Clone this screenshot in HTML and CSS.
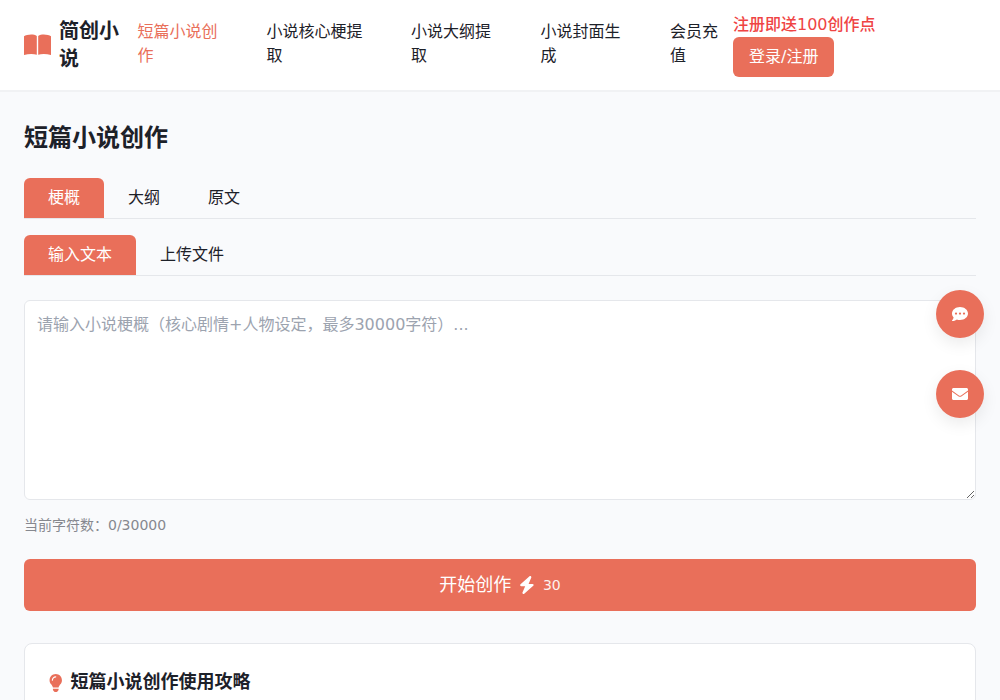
FILE: index.html
```html
<!DOCTYPE html>
<html lang="zh-CN">
<head>
    <meta charset="UTF-8">
    <meta name="viewport" content="width=device-width, initial-scale=1.0">
    <title>简创小说</title>
    <link rel="stylesheet" href="styles.css">
</head>
<body>

    <header class="header">
        <div class="logo">
            <svg class="logo-icon" viewBox="0 0 27 24" fill="currentColor"><path d="M0 3.200C2.500 1.600 9.500.4 12.800 3.100V21.800C9.600 20.500 4.500 20.600 0 22zM14.200 3.100C17.500.4 24.500 1.600 27 3.200V22C22.500 20.600 17.400 20.500 14.200 21.800z"/></svg>
            <span>简创小说</span>
        </div>
        <nav class="nav">
            <a class="nav-link active">短篇小说创作</a>
            <a class="nav-link">小说核心梗提取</a>
            <a class="nav-link">小说大纲提取</a>
            <a class="nav-link">小说封面生成</a>
            <a class="nav-link">会员充值</a>
        </nav>
        <div class="auth">
            <div class="auth-tip">注册即送100创作点</div>
            <button class="login-btn">登录/注册</button>
        </div>
    </header>

    <main class="container">
        <h2>短篇小说创作</h2>

        <div class="tabs">
            <button class="tab active">梗概</button>
            <button class="tab">大纲</button>
            <button class="tab">原文</button>
        </div>
        <div class="tabs input-tabs">
            <button class="tab active">输入文本</button>
            <button class="tab">上传文件</button>
        </div>

        <textarea class="content-input" id="content" placeholder="请输入小说梗概（核心剧情+人物设定，最多30000字符）..."></textarea>
        <p class="char-count">当前字符数：0/30000</p>

        <button class="submit-btn">
            <span>开始创作</span>
            <svg class="bolt-icon" viewBox="0 0 448 512" fill="currentColor"><path d="M349.4 44.6c5.9-13.7 1.5-29.7-10.6-38.5s-28.6-8-39.9 1.8l-256 224c-10 8.8-13.6 22.9-8.9 35.3S50.7 288 64 288H175.5L98.6 467.4c-5.9 13.7-1.5 29.7 10.6 38.5s28.6 8 39.9-1.8l256-224c10-8.8 13.6-22.9 8.9-35.3s-16.6-20.7-30-20.7H272.5L349.4 44.6z"/></svg>
            <span class="cost">30</span>
        </button>

        <section class="guide">
            <h3>
                <svg class="bulb-icon" viewBox="0 0 384 512" fill="currentColor"><path fill-rule="evenodd" d="M192 0C90 0 16 80 16 176c0 45 17 85 44 116c17 19 43 59 52 92H272c9-33 35-73 52-92c27-31 44-71 44-116C368 80 294 0 192 0zM192 96c-44 0-80 36-80 80c0 9-7 16-16 16s-16-7-16-16c0-62 50-112 112-112c9 0 16 7 16 16s-7 16-16 16zM112 416H272V454L240 498C235 507 227 512 217 512H167C157 512 149 507 144 498L112 454z"/></svg>
                短篇小说创作使用攻略
            </h3>
        </section>
    </main>

    <div class="float-btns">
        <button class="float-btn" aria-label="客服">
            <svg viewBox="0 0 512 512" fill="currentColor"><path fill-rule="evenodd" d="M256 32C115 32 0 125 0 240c0 48 19 91 52 127C42 413 8 452 3 457c-3 4-4 10-2 15s6 8 12 8c64 0 115-28 141-49c31 11 66 17 102 17c141 0 256-93 256-208S397 32 256 32zM128 204a36 36 0 1 1 0 72 36 36 0 1 1 0-72zm128 0a36 36 0 1 1 0 72 36 36 0 1 1 0-72zm128 0a36 36 0 1 1 0 72 36 36 0 1 1 0-72z"/></svg>
        </button>
        <button class="float-btn" aria-label="邮件">
            <svg viewBox="0 0 512 512" fill="currentColor"><path d="M48 64H464C490 64 512 86 512 112V144L280 308C264 318 248 318 232 308L0 144V112C0 86 22 64 48 64zM0 182L214 334C240 352 272 352 298 334L512 182V400C512 426 490 448 464 448H48C22 448 0 426 0 400z"/></svg>
        </button>
    </div>

</body>
</html>
```
FILE: styles.css
```css
* {
    box-sizing: border-box;
    margin: 0;
    padding: 0;
}
body {
    font-family: "DejaVu Sans", "Noto Sans CJK SC", sans-serif;
    font-size: 16px;
    line-height: 24px;
    color: #1d2129;
    background: #f9fafc;
    height: 700px;
    overflow: hidden;
}
button {
    font: inherit;
    color: inherit;
    border: none;
    background: none;
    cursor: pointer;
}
.header {
    display: flex;
    align-items: center;
    height: 90px;
    padding: 0 24px;
    background: #fff;
    box-shadow: 0 2px 0 #f1f2f4;
}
.logo {
    display: flex;
    align-items: center;
    gap: 8px;
    width: 113.5px;
    font-size: 20px;
    line-height: 28px;
    font-weight: 700;
}
.logo span {
    width: 60px;
    padding-bottom: 1px;
}
.logo-icon {
    flex: none;
    width: 27px;
    height: 24px;
    color: #e96f5a;
}
.nav {
    display: grid;
    grid-template-columns: 81px 96.5px 81.5px 81.5px 63px;
    column-gap: 48px;
    padding-bottom: 3px;
}
.nav-link.active {
    color: #e96f5a;
}
.auth-tip {
    color: #ef4444;
    font-weight: 500;
}
.login-btn {
    display: block;
    height: 40px;
    padding: 8px 16px;
    border-radius: 6px;
    color: #fff;
    background: #e96f5a;
}
.container {
    height: 610px;
    padding: 32px 24px 0;
    overflow: hidden;
}
h2 {
    font-size: 24px;
    line-height: 32px;
    font-weight: 700;
    margin-bottom: 24px;
}
.tabs {
    display: flex;
    border-bottom: 1px solid #e5e7eb;
    margin-bottom: 16px;
}
.input-tabs {
    margin-bottom: 24px;
}
.tab {
    height: 40px;
    padding: 8px 24px;
    border-radius: 6px 6px 0 0;
}
.tab.active {
    color: #fff;
    background: #e96f5a;
}
.content-input {
    display: block;
    width: 100%;
    height: 200px;
    padding: 12px;
    border: 1px solid #e5e7eb;
    border-radius: 6px;
    background: #fff;
    font: inherit;
    resize: vertical;
}
.content-input::placeholder {
    color: #9ca3af;
}
.char-count {
    margin: 15px 0 24px;
    font-size: 14px;
    line-height: 20px;
    color: #86888f;
}
.submit-btn {
    display: flex;
    align-items: center;
    justify-content: center;
    gap: 8px;
    width: 100%;
    height: 52px;
    border-radius: 6px;
    font-size: 18px;
    line-height: 28px;
    color: #fff;
    background: #e96f5a;
}
.bolt-icon {
    width: 15.75px;
    height: 18px;
}
.cost {
    font-size: 14px;
    opacity: 0.9;
}
.guide {
    height: 300px;
    margin-top: 32px;
    padding: 24px;
    border: 1px solid #e5e7eb;
    border-radius: 8px;
    background: #fff;
}
.guide h3 {
    display: flex;
    align-items: center;
    gap: 8px;
    font-size: 18px;
    line-height: 28px;
    font-weight: 700;
}
.bulb-icon {
    width: 13.5px;
    height: 18px;
    margin-top: 2px;
    color: #e96f5a;
}
.float-btns {
    position: fixed;
    top: 290px;
    right: 16px;
    display: flex;
    flex-direction: column;
    gap: 32px;
}
.float-btn {
    display: flex;
    align-items: center;
    justify-content: center;
    width: 48px;
    height: 48px;
    border-radius: 50%;
    color: #fff;
    background: #e96f5a;
    box-shadow: 0 6px 16px rgba(0, 0, 0, 0.08);
}
.float-btn svg {
    width: 16px;
    height: 16px;
}
```
